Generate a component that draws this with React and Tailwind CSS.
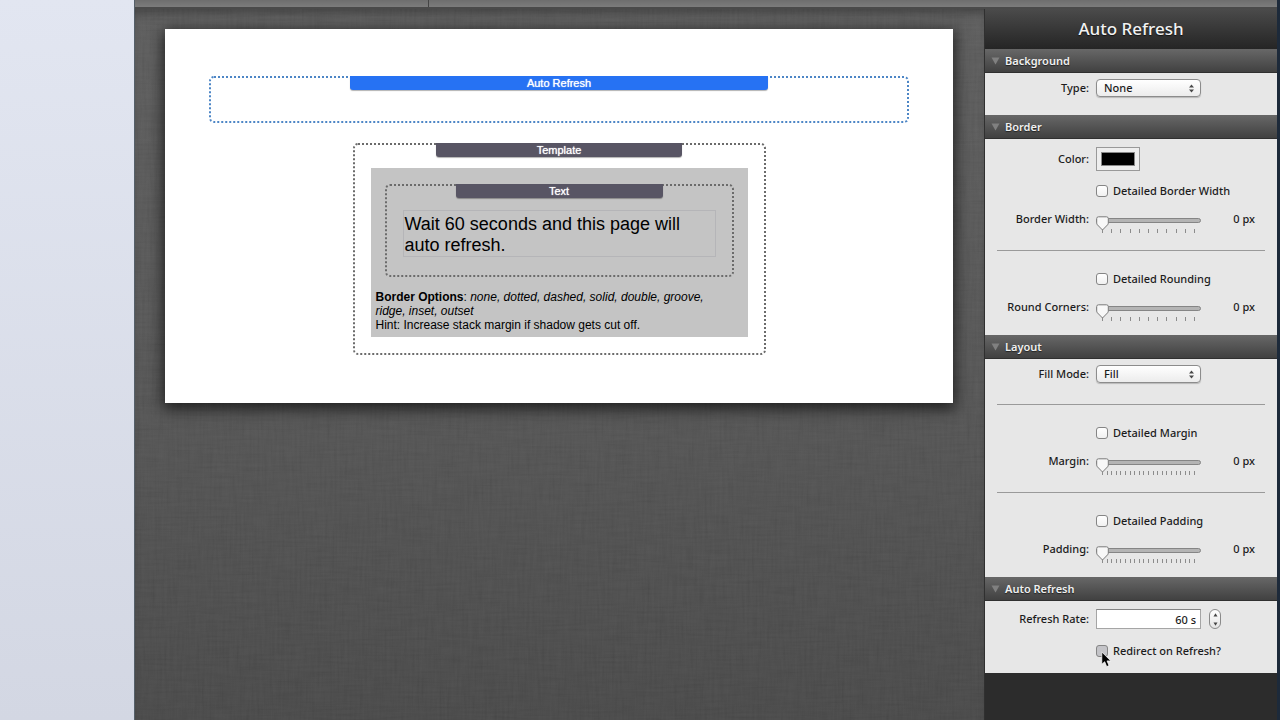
import React, { useState } from "react";

// Small up/down arrows used by the pop-up menus
const UpDown = () => (
  <svg viewBox="0 0 7 9" className="pointer-events-none absolute right-1.5 top-[5px] h-[9px] w-[7px]" aria-hidden="true">
    <path d="M3.5 0.5 L6 3.5 H1 Z M3.5 8.5 L6 5.5 H1 Z" fill="#484848" />
  </svg>
);

const Row = ({ label, htmlFor, value, children }) => (
  <div className="flex h-5 items-center">
    <label htmlFor={htmlFor} className="mr-[7px] w-[104px] shrink-0 text-right whitespace-nowrap">
      {label}
    </label>
    {children}
    {value && <span className="flex-1 pr-[22px] text-right">{value}</span>}
  </div>
);

const Popup = ({ id, label, options }) => (
  <div className="flex h-[18px] items-center">
    <label htmlFor={id} className="mr-[7px] w-[104px] shrink-0 text-right">
      {label}
    </label>
    <div className="relative w-[105px]">
      <select
        id={id}
        className="block h-[18px] w-full appearance-none rounded border border-[#8c8c8c] bg-linear-to-b from-white to-[#ececec] pl-[7px] leading-4 shadow-[0_1px_1px_rgba(0,0,0,0.2)]"
      >
        {options.map((option) => (
          <option key={option}>{option}</option>
        ))}
      </select>
      <UpDown />
    </div>
  </div>
);

const Check = ({ id, label, pressed }) => (
  <div className="flex h-5 items-center pl-[111px]">
    <input
      id={id}
      type="checkbox"
      className={`h-3 w-3 shrink-0 appearance-none rounded-[3px] border border-[#858585] checked:bg-[#6f9fe0] ${
        pressed ? "bg-[#c4c4c8]" : "bg-linear-to-b from-white to-[#f0f0f0]"
      }`}
    />
    <label htmlFor={id} className="pl-[5px] whitespace-nowrap">
      {label}
    </label>
  </div>
);

const Slider = ({ id, label, ticks, max }) => {
  const [value, setValue] = useState(0);

  return (
    <Row label={label} htmlFor={id} value={`${value} px`}>
      <div className="relative h-5 w-[105px] shrink-0">
        <input
          id={id}
          type="range"
          min="0"
          max={max}
          value={value}
          onChange={(e) => setValue(Number(e.target.value))}
          className="mt-[9px] block h-[5px] w-full appearance-none rounded-full border border-[#858585] bg-[#b4b4b4] [&::-webkit-slider-thumb]:h-3 [&::-webkit-slider-thumb]:w-3 [&::-webkit-slider-thumb]:appearance-none [&::-webkit-slider-thumb]:bg-transparent"
        />
        {/* tick marks */}
        <div className="pointer-events-none absolute top-5 left-1.5 flex w-[93px] justify-between">
          {Array.from({ length: ticks }, (_, i) => (
            <span key={i} className="h-1 w-px bg-[#8c8c8c]" />
          ))}
        </div>
        {/* thumb */}
        <svg
          viewBox="0 0 13 15"
          className="pointer-events-none absolute top-[7px] h-[15px] w-[13px]"
          style={{ left: (value / max) * 92 }}
          aria-hidden="true"
        >
          <path
            d="M2.5 0.8 H10.5 Q12.3 0.8 12.3 2.6 V7 Q12.3 8 11.6 8.8 L6.5 14 L1.4 8.8 Q0.7 8 0.7 7 V2.6 Q0.7 0.8 2.5 0.8 Z"
            fill="#f8f8f8"
            stroke="#7b7b7b"
          />
        </svg>
      </div>
    </Row>
  );
};

const Divider = () => <hr className="mx-3 mt-[21px] mb-[18px] border-[#9a9a9a]" />;

const Section = ({ title, children }) => {
  const [open, setOpen] = useState(true);

  return (
    <section>
      <h2>
        <button
          onClick={() => setOpen(!open)}
          className="flex h-6 w-full items-center border-y border-t-[#666] border-b-[#303030] bg-linear-to-b from-[#666] to-[#414141] pl-1.5 text-left text-[11px] font-semibold text-[#f0f0f0] [text-shadow:0_1px_1px_#222]"
        >
          <svg viewBox="0 0 9 8" className="mr-[5px] h-2 w-[9px]" aria-hidden="true">
            <path d="M0.5 0.5 H8.5 L4.5 7.5 Z" fill="#808080" />
          </svg>
          {title}
        </button>
      </h2>
      {open && children}
    </section>
  );
};

// Dotted stack outline with its name tab
const Stack = ({ name, active, className, children }) => (
  <div
    className={`rounded-[5px] border-2 border-dotted ${active ? "border-[#4d86c6]" : "border-[#6b6b6b]"} ${className}`}
  >
    <div
      className={`mx-auto -mt-0.5 h-[14px] w-3/5 rounded-b-[3px] text-center text-[11px] leading-[14px] text-white shadow-[0_1px_1px_rgba(0,0,0,0.3)] [text-shadow:0_0_1px_#fff] ${
        active ? "bg-[#2672f3]" : "bg-[#585564]"
      }`}
    >
      {name}
    </div>
    {children}
  </div>
);

// Linen weave behind the page
const Linen = () => (
  <svg className="absolute inset-0 h-full w-full" aria-hidden="true">
    <filter id="weft" x="0" y="0" width="100%" height="100%">
      <feTurbulence type="fractalNoise" baseFrequency="0.03 0.4" numOctaves="2" seed="4" />
      <feColorMatrix values="1 0 0 0 0  1 0 0 0 0  1 0 0 0 0  0 0 0 0 1" />
    </filter>
    <filter id="warp" x="0" y="0" width="100%" height="100%">
      <feTurbulence type="fractalNoise" baseFrequency="0.4 0.03" numOctaves="2" seed="9" />
      <feColorMatrix values="1 0 0 0 0  1 0 0 0 0  1 0 0 0 0  0 0 0 0 1" />
    </filter>
    <rect width="100%" height="100%" filter="url(#weft)" opacity="0.04" />
    <rect width="100%" height="100%" filter="url(#warp)" opacity="0.04" />
  </svg>
);

const Canvas = () => (
  <main className="relative flex-1 bg-linear-to-b from-[#595959] via-[#525252] to-[#444] px-[30px] pt-5 pr-[31px] font-['Liberation_Sans',Arial,sans-serif] text-black shadow-[inset_0_8px_10px_-4px_rgba(0,0,0,0.35)]">
    <Linen />
    <div className="relative bg-white px-11 pt-[47px] pb-12 shadow-[0_4px_14px_2px_rgba(0,0,0,0.65)]">
      <Stack name="Auto Refresh" active className="h-[47px]" />
      <Stack name="Template" className="mx-auto mt-5 w-[59%]">
        <div className="mx-4 mt-[11px] mb-4 bg-[#c4c4c4] pt-4 pb-[5px]">
          <Stack name="Text" className="mx-3.5">
            <p className="mx-4 mt-3 mb-[18px] border border-[#b5b5b8] px-px pt-[3px] text-[18px] leading-[21px]">
              Wait 60 seconds and this page will auto refresh.
            </p>
          </Stack>
          <div className="mt-[13px] pr-6 pl-[5px] text-[12px] leading-[14px]">
            <p>
              <b>Border Options</b>: <i>none, dotted, dashed, solid, double, groove, </i>
              <i>ridge, inset, outset</i>
            </p>
            <p>Hint: Increase stack margin if shadow gets cut off.</p>
          </div>
        </div>
      </Stack>
    </div>
  </main>
);

const Inspector = () => {
  const [rate, setRate] = useState(60);

  return (
    <aside className="flex w-[293px] shrink-0 flex-col border-l border-[#303030] bg-[#2c2c2c]">
      <h1 className="h-10 bg-linear-to-b from-[#4b4b4b] to-[#252525] text-center text-[17px] leading-10 font-medium text-[#f2f2f2] [text-shadow:0_1px_1px_#111]">
        Auto Refresh
      </h1>
      <div className="bg-[#e7e7e7]">
        <Section title="Background">
          <div className="pt-1.5 pb-[18px]">
            <Popup id="type" label="Type:" options={["None", "Color", "Image"]} />
          </div>
        </Section>

        <Section title="Border">
          <div className="pt-2 pb-[18px]">
            <div className="mb-2.5 flex h-6 items-center">
              <label htmlFor="color" className="mr-[7px] w-[104px] text-right">
                Color:
              </label>
              <input
                id="color"
                type="color"
                defaultValue="#000000"
                className="h-6 w-11 appearance-none border border-[#999] bg-[#eee] p-1 [&::-webkit-color-swatch]:border-[#888] [&::-webkit-color-swatch-wrapper]:p-0"
              />
            </div>
            <div className="space-y-2">
              <Check id="detailed-border" label="Detailed Border Width" />
              <Slider id="border-width" label="Border Width:" ticks={11} max={10} />
            </div>
            <Divider />
            <div className="space-y-2">
              <Check id="detailed-rounding" label="Detailed Rounding" />
              <Slider id="round-corners" label="Round Corners:" ticks={11} max={50} />
            </div>
          </div>
        </Section>

        <Section title="Layout">
          <div className="pt-1.5 pb-[18px]">
            <Popup id="fill-mode" label="Fill Mode:" options={["Fill", "Fixed"]} />
            <Divider />
            <div className="space-y-2">
              <Check id="detailed-margin" label="Detailed Margin" />
              <Slider id="margin" label="Margin:" ticks={21} max={100} />
            </div>
            <Divider />
            <div className="space-y-2">
              <Check id="detailed-padding" label="Detailed Padding" />
              <Slider id="padding" label="Padding:" ticks={21} max={100} />
            </div>
          </div>
        </Section>

        <Section title="Auto Refresh">
          <div className="space-y-3 pt-2 pb-3">
            <Row label="Refresh Rate:" htmlFor="rate">
              <input
                id="rate"
                type="text"
                value={`${rate} s`}
                onChange={(e) => setRate(parseInt(e.target.value) || 0)}
                className="h-5 w-[105px] border border-[#a5a5a5] border-t-[#858585] bg-white pr-1 text-right"
              />
              <div className="ml-2 flex h-5 w-3 flex-col overflow-hidden rounded-full border border-[#8a8a8a] bg-linear-to-b from-white to-[#e4e4e4]">
                <button aria-label="Increase" onClick={() => setRate(rate + 1)} className="flex flex-1 items-center justify-center">
                  <svg viewBox="0 0 5 4" className="h-1 w-[5px]">
                    <path d="M2.5 0.3 L4.5 3.5 H0.5 Z" fill="#444" />
                  </svg>
                </button>
                <button aria-label="Decrease" onClick={() => setRate(rate - 1)} className="flex flex-1 items-center justify-center">
                  <svg viewBox="0 0 5 4" className="h-1 w-[5px]">
                    <path d="M2.5 3.7 L4.5 0.5 H0.5 Z" fill="#444" />
                  </svg>
                </button>
              </div>
            </Row>
            <div className="relative">
              <Check id="redirect" label="Redirect on Refresh?" pressed />
              {/* mouse pointer */}
              <svg viewBox="0 0 11 17" className="pointer-events-none absolute top-2.5 left-[116px] h-[17px] w-[11px]" aria-hidden="true">
                <path d="M0.8 1 V13.3 L3.7 10.7 L5.7 15.6 L8 14.6 L6 9.9 H9.8 Z" fill="#000" stroke="#fff" strokeWidth="0.7" />
              </svg>
            </div>
          </div>
        </Section>
      </div>
    </aside>
  );
};

const App = () => {
  return (
    <div className="flex min-h-screen bg-[#1d2a3a] pr-[3px] font-['Noto_Sans','Open_Sans',sans-serif] text-[11px] font-medium text-[#1c1c1c]">
      <div className="w-[134px] shrink-0 bg-linear-to-b from-[#e2e6f1] to-[#d3d7e3]" />
      <div className="flex flex-1 flex-col border-l border-[#55606a]">
        {/* bottom edge of the toolbar */}
        <div className="flex h-[9px] border-b-2 border-[#4a4a4a] bg-linear-to-b from-[#6e6e6e] to-[#7c7c7c]">
          <div className="w-[294px] border-r border-[#444]" />
        </div>
        <div className="flex flex-1">
          <Canvas />
          <Inspector />
        </div>
      </div>
    </div>
  );
};

export default App;
